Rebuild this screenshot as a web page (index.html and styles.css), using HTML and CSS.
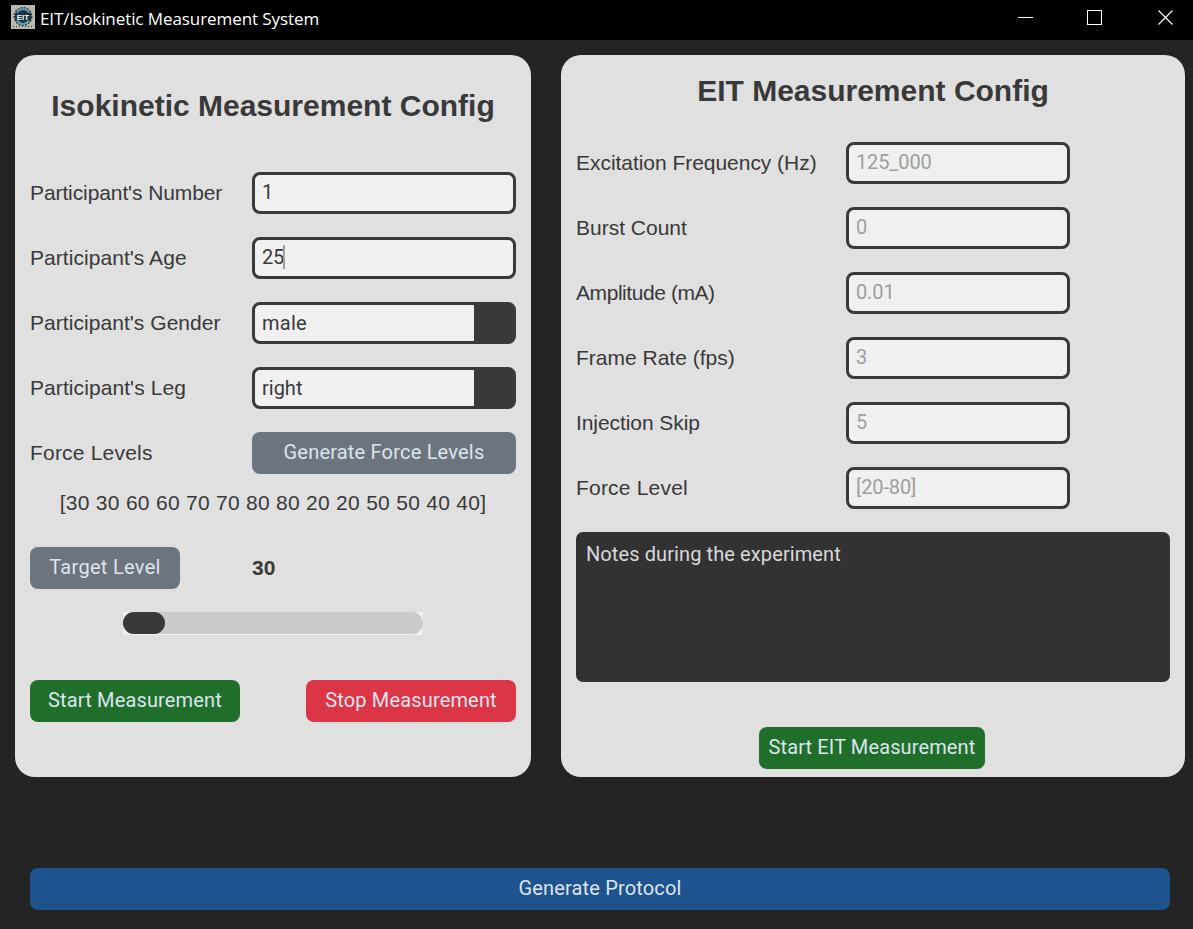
FILE: index.html
```html
<!DOCTYPE html>
<html lang="en">
<head>
<meta charset="utf-8">
<title>EIT/Isokinetic Measurement System</title>
<link rel="stylesheet" href="styles.css">
</head>
<body>
<header class="titlebar">
  <svg class="app-icon" viewBox="0 0 24 24" width="24" height="24">
    <rect width="24" height="24" fill="#b9b8aa"/>
    <circle cx="12" cy="11.5" r="8.2" fill="#183541" stroke="#24313a" stroke-width="2.4" stroke-dasharray="2 1"/>
    <path d="M6 7.500a7 7 0 0 1 12 0M6 15.500a7 7 0 0 0 12 0" fill="none" stroke="#5f9dbd" stroke-width="2"/>
    <path d="M2 21.500h21" stroke="#34383a" stroke-dasharray="1 2"/>
    <text class="icon-text" x="12" y="14.500" text-anchor="middle">EIT</text>
  </svg>
  <h1 class="app-name">EIT/Isokinetic Measurement System</h1>
  <svg class="window-controls" viewBox="0 0 175 40" width="175" height="40" fill="none" stroke="#fff">
    <path d="M0 17.500h15"/>
    <rect x="69.500" y="10.500" width="14" height="14"/>
    <path d="M140.500 10.500l14 14M154.500 10.500l-14 14" stroke-width="1.200"/>
  </svg>
</header>
<main class="panels">
  <section class="panel panel-iso">
    <h2 class="heading heading-iso">Isokinetic Measurement Config</h2>
    <div class="fields">
      <span class="label l1">Participant's Number</span><div class="entry">1</div>
      <span class="label l2">Participant's Age</span><div class="entry age">25<i class="caret"></i></div>
      <span class="label l3">Participant's Gender</span><div class="entry combo gender">male</div>
      <span class="label l4">Participant's Leg</span><div class="entry combo">right</div>
      <span class="label l5">Force Levels</span><button class="btn gray b1">Generate Force Levels</button>
    </div>
    <p class="levels">[30 30 60 60 70 70 80 80 20 20 50 50 40 40]</p>
    <div class="target"><button class="btn gray b2">Target Level</button><b class="target-value">30</b></div>
    <div class="progress"><div class="track"><div class="bar"></div></div></div>
    <div class="actions"><button class="btn green b3">Start Measurement</button><button class="btn red b4">Stop Measurement</button></div>
  </section>
  <section class="panel panel-eit">
    <h2 class="heading heading-eit">EIT Measurement Config</h2>
    <div class="fields">
      <span class="label r1">Excitation Frequency (Hz)</span><div class="entry hint">125_000</div>
      <span class="label">Burst Count</span><div class="entry hint">0</div>
      <span class="label r3">Amplitude (mA)</span><div class="entry hint">0.01</div>
      <span class="label">Frame Rate (fps)</span><div class="entry hint">3</div>
      <span class="label r5">Injection Skip</span><div class="entry hint">5</div>
      <span class="label r6">Force Level</span><div class="entry hint">[20-80]</div>
    </div>
    <div class="notes">Notes during the experiment</div>
    <button class="btn green b5">Start EIT Measurement</button>
  </section>
</main>
<footer class="footer"><button class="btn blue b6">Generate Protocol</button></footer>
</body>
</html>
```
FILE: styles.css
```css
* { box-sizing: border-box; }
body {
  margin: 0;
  width: 1193px;
  height: 929px;
  overflow: hidden;
  background: #242424;
  color: #393939;
  font-family: "Liberation Sans", Arial, sans-serif;
  font-size: 21px;
}
.titlebar {
  display: flex;
  align-items: center;
  height: 40px;
  padding-left: 11px;
  background: #000;
}
.app-icon { margin-top: -7px; }
.icon-text { font: bold 8px "Liberation Sans", Arial, sans-serif; fill: #f4f8f8; }
.app-name {
  margin: -3px auto 0 5px;
  color: #fff;
  font: 400 17px/24px "Open Sans", sans-serif;
  letter-spacing: -0.08px;
  white-space: nowrap;
}
.window-controls { flex: none; }
.panels { display: flex; gap: 30px; padding: 15px 8px 0 15px; }
.panel { height: 722px; padding: 0 15px; border-radius: 20px; background: #e0e0e0; }
.panel-iso { width: 516px; }
.panel-eit { width: 624px; display: flex; flex-direction: column; }
.heading { margin: 0; text-align: center; font-size: 30px; line-height: 36px; white-space: nowrap; }
.heading-iso { padding: 33px 0 48px; }
.heading-eit { padding: 18px 0 33px; }
.fields { display: grid; grid-auto-rows: 42px; row-gap: 23px; align-items: center; }
.panel-iso .fields { grid-template-columns: 222px 264px; }
.panel-eit .fields { grid-template-columns: 270px 224px; }
.label { white-space: nowrap; line-height: 24px; }
.l1 { letter-spacing: -0.1px; }
.l2, .l3 { letter-spacing: 0.05px; }
.l4 { letter-spacing: 0.08px; }
.l5, .r6 { letter-spacing: 0.2px; }
.r1 { letter-spacing: -0.04px; }
.r3 { letter-spacing: -0.43px; }
.r5 { letter-spacing: -0.07px; }
.entry {
  display: flex;
  align-items: center;
  height: 42px;
  padding: 0 7px 2px;
  border: 3px solid #393939;
  border-radius: 8px;
  background: #f0f0f0;
  font: 20px/24px Roboto, sans-serif;
}
.age { letter-spacing: -0.3px; }
.hint { color: #9e9e9e; letter-spacing: -0.12px; }
.combo { padding-bottom: 0; background: linear-gradient(to right, #f0f0f0 219px, #393939 219px); }
.gender { letter-spacing: 0.25px; }
.caret { width: 2px; height: 24px; margin-left: -1px; background: #9c9fa3; }
.btn {
  height: 42px;
  padding: 0 0 2px;
  border: 0;
  border-radius: 8px;
  color: #dce4ee;
  font: 20px/24px Roboto, sans-serif;
  white-space: nowrap;
}
.gray { background: #6c757d; }
.green { background: #1f6f2b; }
.red { background: #dc3545; }
.blue { background: #1f538d; }
.b1 { letter-spacing: 0.2px; }
.levels { margin: 17px 0 0; text-align: center; letter-spacing: 0.28px; line-height: 24px; white-space: nowrap; }
.target { display: flex; align-items: center; margin-top: 32px; }
.b2 { width: 150px; letter-spacing: 0.3px; }
.target-value { margin-left: 72px; line-height: 24px; }
.progress { width: 300px; height: 23px; margin: 23px 0 0 93px; background: #f0f0f0; }
.track { height: 22px; border-radius: 11px; background: #cbcbcb; }
.bar { width: 42px; height: 22px; border-radius: 11px; background: #393939; }
.actions { display: flex; justify-content: space-between; margin-top: 45px; }
.b3, .b4 { width: 210px; letter-spacing: 0.16px; }
.notes {
  height: 150px;
  margin-top: 23px;
  padding: 10px;
  border-radius: 7px;
  background: #323232;
  color: #d8d9db;
  font: 20px/24px Roboto, sans-serif;
  letter-spacing: 0.1px;
}
.b5 { width: 226px; margin-top: 45px; margin-left: 183px; letter-spacing: 0.12px; }
.footer { padding: 91px 23px 0 30px; }
.b6 { width: 100%; letter-spacing: 0.15px; }
```
